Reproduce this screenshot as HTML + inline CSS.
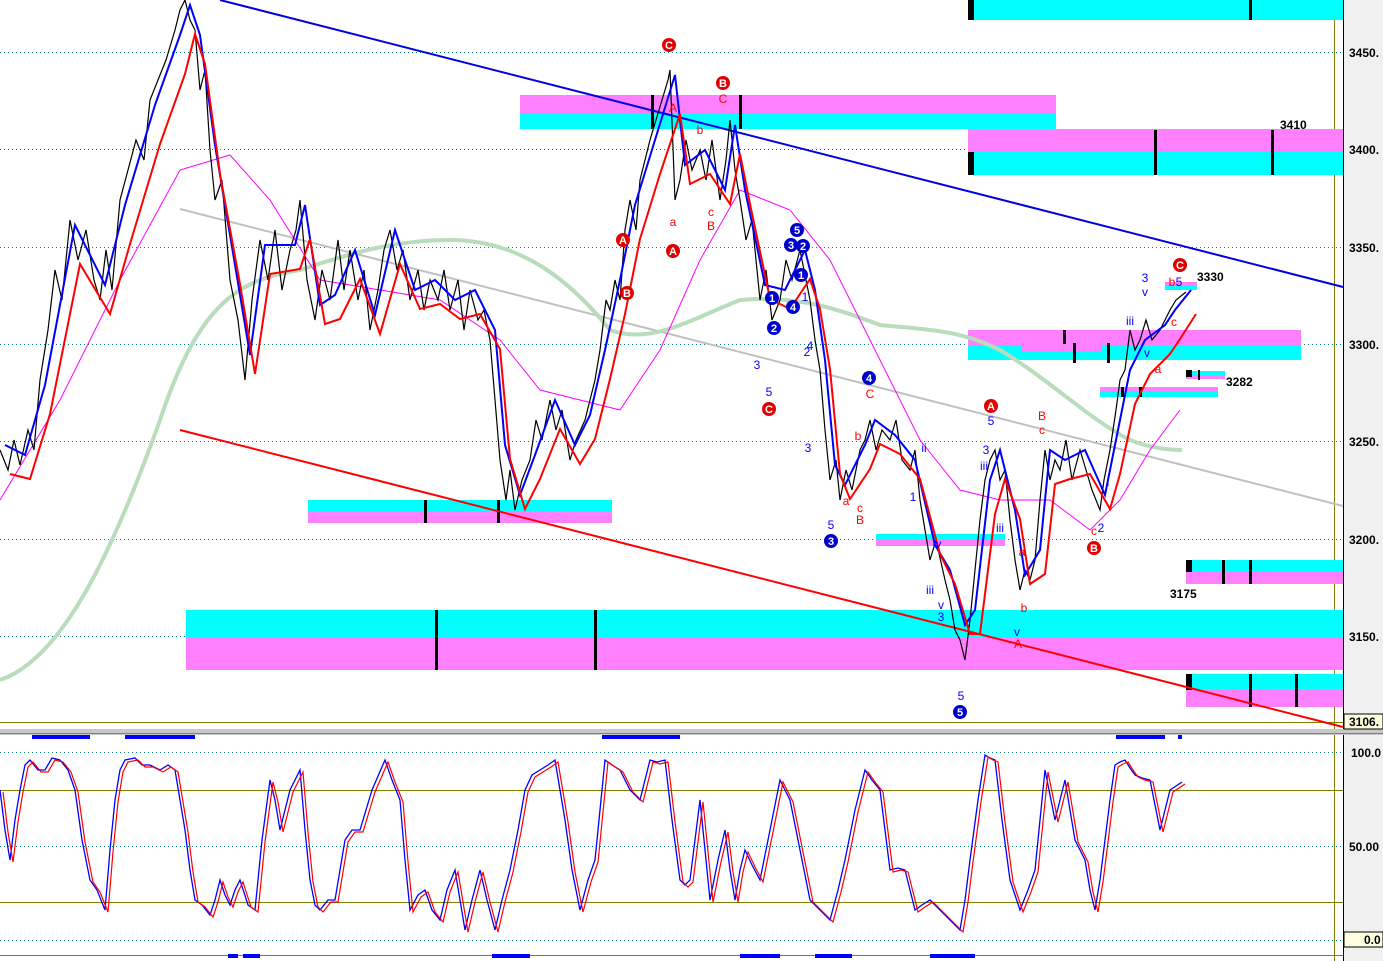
<!DOCTYPE html>
<html><head><meta charset="utf-8"><style>
html,body{margin:0;padding:0;background:#fff;overflow:hidden}
svg{display:block;font-family:"Liberation Sans",Arial,sans-serif}
</style></head><body>
<svg width="1383" height="961" viewBox="0 0 1383 961" xmlns="http://www.w3.org/2000/svg">
<rect width="1383" height="961" fill="#fff"/>
<rect x="1343" y="0" width="40" height="961" fill="#f0f0f0"/>
<line x1="1343.5" y1="0" x2="1343.5" y2="961" stroke="#000"/>
<g stroke="#008080" stroke-dasharray="1,3" stroke-width="1">
<line x1="0" y1="52.5" x2="1343" y2="52.5"/><line x1="0" y1="149.5" x2="1343" y2="149.5"/>
<line x1="0" y1="247.5" x2="1343" y2="247.5"/><line x1="0" y1="344.5" x2="1343" y2="344.5"/>
<line x1="0" y1="441.5" x2="1343" y2="441.5"/><line x1="0" y1="539.5" x2="1343" y2="539.5"/>
<line x1="0" y1="636.5" x2="1343" y2="636.5"/>
<line x1="0" y1="752.5" x2="1343" y2="752.5"/><line x1="0" y1="846.5" x2="1343" y2="846.5"/><line x1="0" y1="940.5" x2="1343" y2="940.5"/>
</g>
<g stroke="#808000" stroke-width="1">
<line x1="0" y1="722.5" x2="1343" y2="722.5"/>
<line x1="0" y1="790.5" x2="1343" y2="790.5"/>
<line x1="0" y1="902.5" x2="1343" y2="902.5"/>
<line x1="0" y1="955.5" x2="1343" y2="955.5"/>
<line x1="1334.5" y1="0" x2="1334.5" y2="961"/>
</g>
<rect x="0" y="729" width="1383" height="6" fill="#c8c8c8"/>
<line x1="0" y1="733.5" x2="1383" y2="733.5" stroke="#808080"/>
<g>
<rect x="968" y="0" width="375" height="20" fill="#00ffff"/>
<rect x="520" y="95" width="536" height="18" fill="#ff80ff"/><rect x="520" y="113" width="536" height="16" fill="#00ffff"/>
<rect x="968" y="129" width="375" height="23" fill="#ff80ff"/><rect x="968" y="152" width="375" height="23" fill="#00ffff"/>
<rect x="308" y="500" width="304" height="11" fill="#00ffff"/><rect x="308" y="511" width="304" height="12" fill="#ff80ff"/>
<rect x="968" y="330" width="333" height="16" fill="#ff80ff"/><rect x="968" y="346" width="333" height="14" fill="#00ffff"/><rect x="1022" y="346" width="80" height="5" fill="#ff80ff"/>
<rect x="1100" y="387" width="118" height="5" fill="#ff80ff"/><rect x="1100" y="392" width="118" height="5" fill="#00ffff"/>
<rect x="1165" y="282" width="32" height="4" fill="#ff80ff"/><rect x="1165" y="286" width="32" height="4" fill="#00ffff"/>
<rect x="1186" y="371" width="39" height="4" fill="#00ffff"/><rect x="1186" y="375" width="39" height="4" fill="#ff80ff"/>
<rect x="876" y="534" width="129" height="6" fill="#00ffff"/><rect x="876" y="540" width="129" height="6" fill="#ff80ff"/>
<rect x="186" y="610" width="1157" height="28" fill="#00ffff"/><rect x="186" y="638" width="1157" height="32" fill="#ff80ff"/>
<rect x="1186" y="560" width="157" height="12" fill="#00ffff"/><rect x="1186" y="572" width="157" height="12" fill="#ff80ff"/>
<rect x="1186" y="674" width="157" height="16" fill="#00ffff"/><rect x="1186" y="690" width="157" height="17" fill="#ff80ff"/>
</g>
<g fill="#000">
<rect x="968" y="0" width="6" height="20"/><rect x="1249" y="0" width="3" height="20"/>
<rect x="968" y="152" width="6" height="23"/><rect x="1154" y="130" width="3" height="45"/><rect x="1271" y="130" width="3" height="45"/>
<rect x="651" y="95" width="3" height="34"/><rect x="739" y="95" width="3" height="34"/>
<rect x="424" y="500" width="3" height="23"/><rect x="497" y="500" width="3" height="23"/>
<rect x="435" y="610" width="3" height="60"/><rect x="594" y="610" width="3" height="60"/>
<rect x="1186" y="560" width="6" height="12"/><rect x="1222" y="560" width="3" height="24"/><rect x="1249" y="560" width="3" height="24"/>
<rect x="1186" y="674" width="6" height="16"/><rect x="1249" y="674" width="3" height="33"/><rect x="1295" y="674" width="3" height="33"/>
<rect x="1063" y="330" width="3" height="14"/><rect x="1073" y="343" width="3" height="20"/><rect x="1107" y="343" width="3" height="20"/>
<rect x="1121" y="387" width="3" height="10"/><rect x="1139" y="387" width="3" height="10"/>
<rect x="1186" y="370" width="6" height="7"/><rect x="1198" y="370" width="2" height="10"/>
</g>
<line x1="220" y1="0" x2="1343" y2="287" stroke="#0000e0" stroke-width="2"/>
<line x1="180" y1="430" x2="1343" y2="727" stroke="#ff0000" stroke-width="2"/>
<line x1="180" y1="209" x2="1343" y2="506" stroke="#c0c0c0" stroke-width="2"/>
<path d="M0,680 C60,660 110,560 160,420 C200,300 240,280 300,270 C360,250 400,240 450,240 C520,240 570,280 610,330 C650,345 690,320 740,300 C800,295 840,310 880,325 C930,330 960,330 1000,350 C1050,380 1090,420 1130,440 C1150,448 1170,450 1182,450" fill="none" stroke="#b8dcbc" stroke-width="4"/>
<polyline fill="none" stroke="#ff00ff" stroke-width="1" points="0,500 60,400 120,280 180,170 230,155 270,200 320,280 380,290 440,300 500,340 540,390 580,400 620,410 660,350 700,260 740,190 790,210 830,260 870,340 920,440 960,490 1000,500 1050,500 1090,530 1120,500 1150,450 1180,410"/>
<polyline fill="none" stroke="#000" stroke-width="1.2" points="0,450 8,470 14,440 20,465 28,430 34,450 40,380 48,330 55,270 62,300 70,220 78,260 86,230 94,280 100,300 106,250 112,290 120,200 128,170 136,140 144,160 150,100 158,80 166,60 175,30 180,10 185,0 190,20 195,30 200,90 205,70 210,150 215,200 222,180 230,280 238,320 245,380 252,300 260,240 268,280 275,230 282,290 290,250 296,230 300,200 307,280 315,320 322,270 330,300 338,240 344,290 350,250 358,300 364,270 370,330 378,290 384,250 390,230 397,270 403,250 410,300 418,270 424,310 430,280 438,300 444,270 450,310 458,280 464,330 470,290 478,320 484,310 490,340 495,400 500,460 506,500 510,470 515,510 522,480 530,460 536,420 542,440 550,400 556,430 562,410 570,460 576,440 585,420 590,400 595,380 600,350 606,300 610,310 615,280 620,300 625,230 630,200 636,230 640,180 645,160 650,140 656,120 662,100 668,80 670,70 675,200 680,180 686,140 692,170 700,150 706,180 712,140 720,200 726,160 730,120 735,170 740,200 746,240 752,220 760,300 766,270 772,320 780,300 786,260 792,280 800,250 806,280 810,300 815,340 820,370 825,430 830,480 836,460 840,500 846,470 852,490 860,450 865,440 870,420 876,450 882,430 890,440 896,420 902,460 910,470 915,450 920,500 925,530 930,560 936,540 945,580 950,600 955,630 960,640 965,660 970,620 976,560 980,520 985,480 990,460 995,450 1000,480 1005,470 1010,520 1015,560 1020,590 1025,570 1030,580 1035,560 1040,500 1045,450 1050,480 1055,460 1060,470 1066,440 1072,480 1080,450 1086,470 1092,490 1100,510 1104,480 1110,450 1116,410 1120,380 1125,370 1130,330 1135,350 1140,340 1146,320 1152,340 1160,330 1165,320 1170,310 1176,300 1186,292"/>
<polyline fill="none" stroke="#0000ff" stroke-width="2" transform="translate(5,-5)" points="0,450 20,460 40,390 70,230 100,290 120,210 150,110 175,40 185,10 195,40 210,150 230,270 245,360 260,250 290,250 300,210 315,310 330,300 350,255 370,320 390,235 410,295 430,285 450,305 470,295 490,335 500,450 515,500 530,460 550,405 570,450 585,420 600,355 615,285 630,210 650,145 670,80 680,170 700,155 720,195 730,130 740,195 760,290 780,295 800,255 810,295 820,365 830,470 840,490 860,450 870,425 890,440 910,465 930,550 945,575 960,630 970,615 985,485 995,455 1010,515 1020,580 1035,555 1045,455 1060,465 1080,455 1100,500 1110,450 1125,375 1140,345 1160,330 1170,315 1186,295"/>
<polyline fill="none" stroke="#ff0000" stroke-width="2" transform="translate(10,14)" points="0,460 20,465 40,400 70,250 100,300 120,230 150,130 175,60 185,20 195,50 210,160 230,270 245,360 260,260 290,255 300,225 315,310 330,305 350,265 370,320 390,250 410,295 430,290 450,305 470,300 490,335 500,445 515,495 530,465 550,415 570,450 585,425 600,365 615,300 630,225 650,160 670,100 680,170 700,160 720,190 730,140 740,190 760,285 780,295 800,265 810,295 820,355 830,460 840,485 860,455 870,430 890,440 910,465 930,540 945,570 960,620 970,620 985,500 995,465 1010,505 1020,570 1035,560 1045,470 1060,465 1080,460 1100,495 1110,460 1125,390 1140,360 1160,340 1170,325 1186,300"/>
<g fill="#0000ff">
<rect x="32" y="735" width="58" height="4"/><rect x="125" y="735" width="70" height="4"/><rect x="602" y="735" width="78" height="4"/><rect x="1116" y="735" width="49" height="4"/><rect x="1178" y="735" width="4" height="4"/>
<rect x="228" y="954" width="10" height="4"/><rect x="243" y="954" width="17" height="4"/><rect x="492" y="954" width="38" height="4"/><rect x="740" y="954" width="40" height="4"/><rect x="815" y="954" width="37" height="4"/><rect x="930" y="954" width="45" height="4"/>
</g>
<polyline fill="none" stroke="#0000ff" stroke-width="1.3" points="0,790 5,830 10,860 15,820 20,790 25,765 30,760 38,770 45,770 52,758 60,760 68,770 75,790 82,840 90,880 97,890 105,910 110,850 115,800 120,770 125,760 135,758 142,765 150,765 160,770 168,765 175,770 180,800 185,830 190,870 195,900 202,905 210,915 215,900 220,880 225,895 230,905 235,890 240,880 248,905 255,910 262,840 270,780 275,800 280,830 290,790 300,770 305,830 310,880 315,905 320,910 328,900 335,900 340,870 345,840 352,830 360,830 372,790 385,760 392,780 400,800 405,860 410,910 418,895 425,890 432,910 440,920 447,890 455,870 460,900 465,930 472,900 480,870 487,900 495,930 502,900 510,870 518,830 525,790 532,775 540,770 548,765 555,760 560,790 565,820 572,870 580,910 588,880 595,860 600,810 605,760 612,765 620,770 630,790 640,800 645,780 650,760 657,762 665,760 672,820 680,880 685,885 690,880 695,840 700,800 705,850 710,900 718,860 725,830 730,870 735,900 740,870 745,850 752,865 760,880 770,830 780,780 785,790 790,800 800,850 810,900 820,910 830,920 838,890 845,860 855,810 865,770 872,780 880,790 885,830 890,870 898,868 905,870 910,890 915,910 922,905 930,900 940,910 950,920 955,925 960,930 965,900 970,860 978,800 985,755 990,758 995,760 1002,820 1010,880 1015,895 1020,910 1028,890 1035,870 1040,820 1045,770 1050,795 1055,820 1060,800 1065,780 1070,810 1075,840 1080,850 1085,860 1090,890 1095,910 1100,880 1105,840 1110,800 1115,765 1120,762 1125,760 1130,768 1135,775 1142,778 1150,780 1155,805 1160,830 1165,810 1170,790 1176,786 1182,782"/>
<polyline fill="none" stroke="#ff0000" stroke-width="1.2" transform="translate(3,2)" points="0,790 5,830 10,860 15,820 20,790 25,765 30,760 38,770 45,770 52,758 60,760 68,770 75,790 82,840 90,880 97,890 105,910 110,850 115,800 120,770 125,760 135,758 142,765 150,765 160,770 168,765 175,770 180,800 185,830 190,870 195,900 202,905 210,915 215,900 220,880 225,895 230,905 235,890 240,880 248,905 255,910 262,840 270,780 275,800 280,830 290,790 300,770 305,830 310,880 315,905 320,910 328,900 335,900 340,870 345,840 352,830 360,830 372,790 385,760 392,780 400,800 405,860 410,910 418,895 425,890 432,910 440,920 447,890 455,870 460,900 465,930 472,900 480,870 487,900 495,930 502,900 510,870 518,830 525,790 532,775 540,770 548,765 555,760 560,790 565,820 572,870 580,910 588,880 595,860 600,810 605,760 612,765 620,770 630,790 640,800 645,780 650,760 657,762 665,760 672,820 680,880 685,885 690,880 695,840 700,800 705,850 710,900 718,860 725,830 730,870 735,900 740,870 745,850 752,865 760,880 770,830 780,780 785,790 790,800 800,850 810,900 820,910 830,920 838,890 845,860 855,810 865,770 872,780 880,790 885,830 890,870 898,868 905,870 910,890 915,910 922,905 930,900 940,910 950,920 955,925 960,930 965,900 970,860 978,800 985,755 990,758 995,760 1002,820 1010,880 1015,895 1020,910 1028,890 1035,870 1040,820 1045,770 1050,795 1055,820 1060,800 1065,780 1070,810 1075,840 1080,850 1085,860 1090,890 1095,910 1100,880 1105,840 1110,800 1115,765 1120,762 1125,760 1130,768 1135,775 1142,778 1150,780 1155,805 1160,830 1165,810 1170,790 1176,786 1182,782"/>
<g font-size="12" font-weight="bold">
<text x="1280" y="129" fill="#000">3410</text>
<text x="1197" y="281" fill="#000">3330</text>
<text x="1226" y="386" fill="#000">3282</text>
<text x="1170" y="598" fill="#000">3175</text>
</g>
<g font-size="12" font-weight="bold" fill="#000">
<text x="1349" y="57">3450.</text><text x="1349" y="154">3400.</text><text x="1349" y="252">3350.</text><text x="1349" y="349">3300.</text><text x="1349" y="446">3250.</text><text x="1349" y="544">3200.</text><text x="1349" y="641">3150.</text>
<text x="1351" y="757">100.0</text><text x="1349" y="851">50.00</text>
</g>
<rect x="1344" y="714" width="39" height="15" fill="#ffffe0" stroke="#000"/><text x="1349" y="726" font-size="12" font-weight="bold" fill="#000">3106.</text>
<rect x="1344" y="932" width="39" height="15" fill="#ffffe0" stroke="#000"/><text x="1364" y="944" font-size="12" font-weight="bold" fill="#000">0.0</text>
<g font-size="11" font-weight="bold" text-anchor="middle">
<g fill="#e00000">
<circle cx="669" cy="45" r="7"/><circle cx="723" cy="83" r="7"/><circle cx="623" cy="240" r="7"/><circle cx="673" cy="251" r="7"/><circle cx="627" cy="293" r="7"/><circle cx="769" cy="409" r="7"/><circle cx="991" cy="406" r="7"/><circle cx="1094" cy="548" r="7"/><circle cx="1180" cy="265" r="7"/>
</g>
<g fill="#0000cc">
<circle cx="797" cy="230" r="7"/><circle cx="791" cy="245" r="7"/><circle cx="803" cy="246" r="7"/><circle cx="801" cy="275" r="7"/><circle cx="772" cy="298" r="7"/><circle cx="793" cy="307" r="7"/><circle cx="774" cy="328" r="7"/><circle cx="869" cy="378" r="7"/><circle cx="831" cy="541" r="7"/><circle cx="960" cy="712" r="7"/>
</g>
<g fill="#fff">
<text x="669" y="49">C</text><text x="723" y="87">B</text><text x="623" y="244">A</text><text x="673" y="255">A</text><text x="627" y="297">B</text><text x="769" y="413">C</text><text x="991" y="410">A</text><text x="1094" y="552">B</text><text x="1180" y="269">C</text>
<text x="797" y="234">5</text><text x="791" y="249">3</text><text x="803" y="250">2</text><text x="801" y="279">1</text><text x="772" y="302">1</text><text x="793" y="311">4</text><text x="774" y="332">2</text><text x="869" y="382">4</text><text x="831" y="545">3</text><text x="960" y="716">5</text>
</g>
</g>
<g font-size="12" text-anchor="middle">
<g fill="#ff0000">
<text x="673" y="226">a</text><text x="711" y="216">c</text><text x="711" y="230">B</text><text x="700" y="134">b</text><text x="723" y="103">C</text><text x="673" y="112">A</text>
<text x="858" y="440">b</text><text x="846" y="505">a</text><text x="860" y="512">c</text><text x="860" y="524">B</text><text x="870" y="398">C</text>
<text x="1042" y="420">B</text><text x="1042" y="434">c</text><text x="1018" y="648">A</text><text x="1024" y="612">b</text><text x="1022" y="556">a</text><text x="1094" y="535">c</text>
<text x="1158" y="373">a</text><text x="1174" y="326">c</text><text x="1172" y="286">b</text>
</g>
<g fill="#0000ff">
<text x="757" y="369">3</text><text x="769" y="396">5</text><text x="807" y="356">2</text><text x="810" y="350">4</text><text x="805" y="301">1</text><text x="808" y="452">3</text><text x="831" y="529">5</text>
<text x="913" y="501">1</text><text x="924" y="452">ii</text><text x="930" y="594">iii</text><text x="941" y="609">v</text><text x="941" y="621">3</text><text x="937" y="548">iv</text>
<text x="991" y="425">5</text><text x="986" y="454">3</text><text x="984" y="470">iii</text><text x="1000" y="532">iii</text><text x="1017" y="636">v</text><text x="961" y="700">5</text>
<text x="1101" y="532">2</text><text x="1108" y="486">i</text><text x="1130" y="325">iii</text><text x="1145" y="282">3</text><text x="1145" y="296">v</text><text x="1179" y="286">5</text><text x="1147" y="357">v</text>
</g></g>
</svg>
</body></html>
